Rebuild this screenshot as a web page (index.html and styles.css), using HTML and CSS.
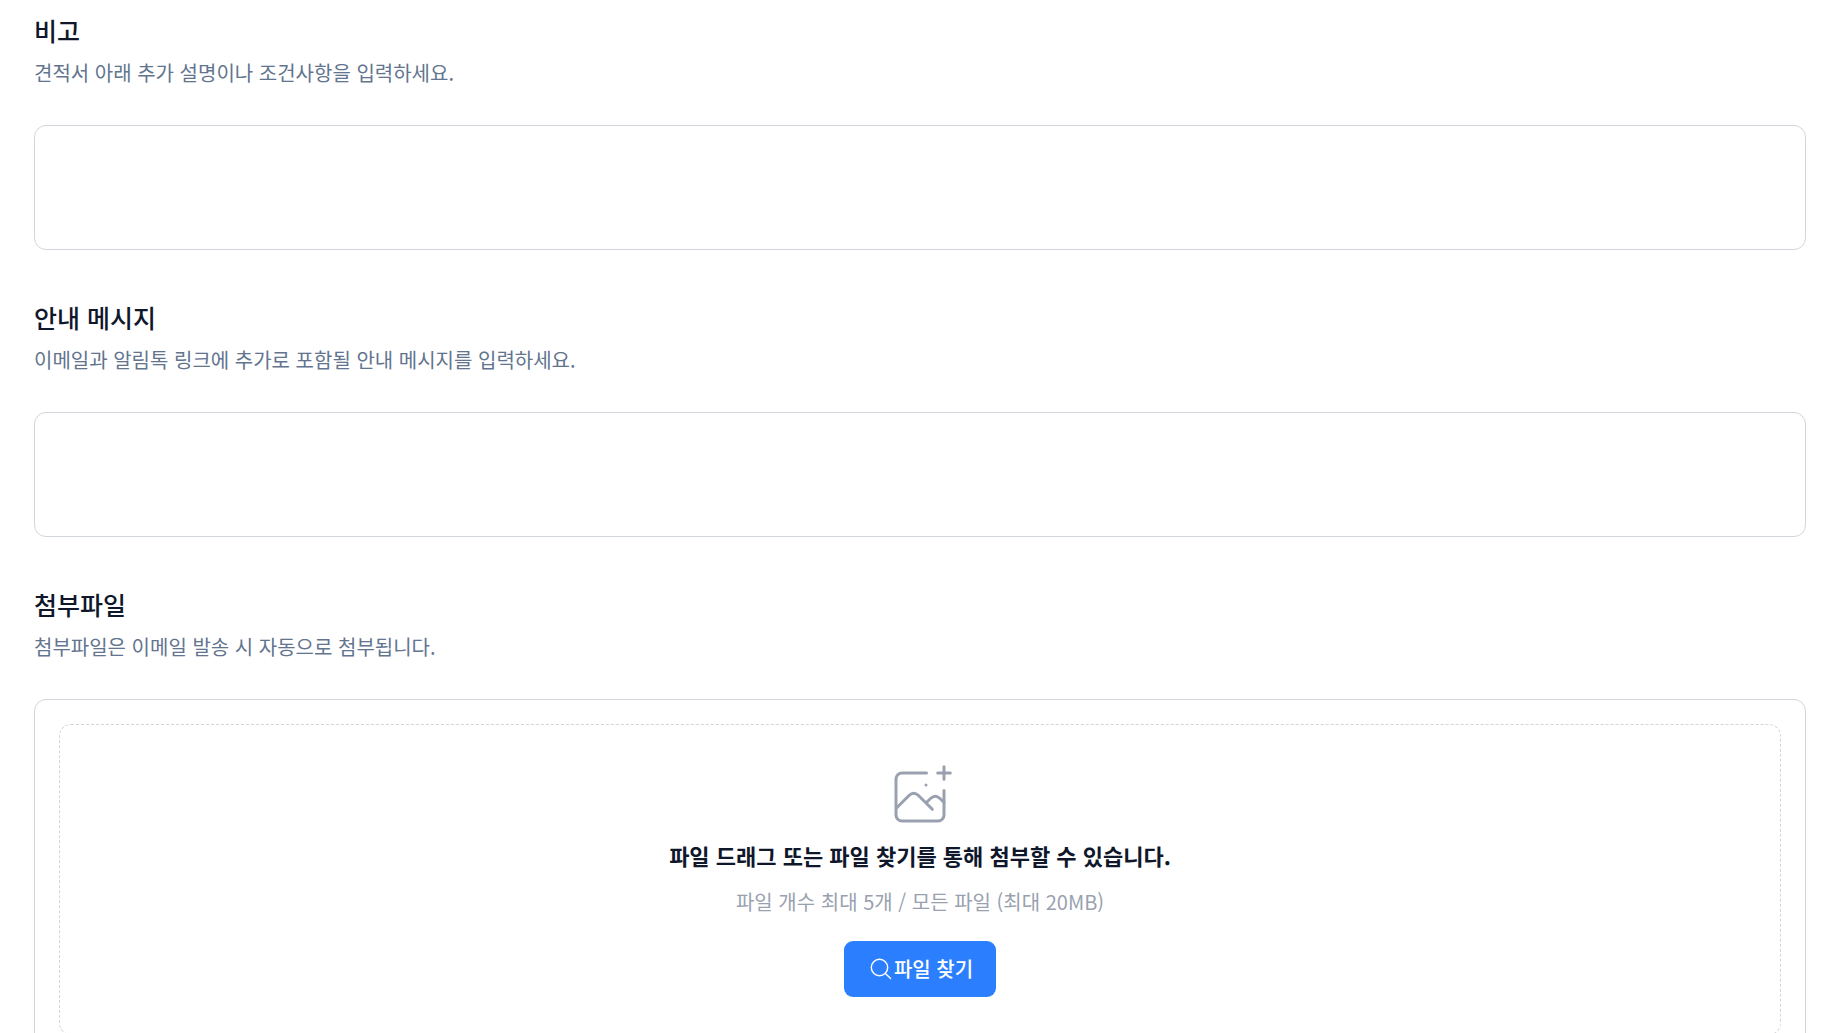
FILE: index.html
```html
<!DOCTYPE html>
<html lang="ko">
<head>
<meta charset="utf-8">
<meta name="viewport" content="width=device-width, initial-scale=1">
<title>견적서 작성</title>
<link rel="stylesheet" href="styles.css">
</head>
<body>
<main class="form">
  <section class="section">
    <label class="section-title" for="remarks">비고</label>
    <p class="section-desc" id="remarks-desc">견적서 아래 추가 설명이나 조건사항을 입력하세요.</p>
    <textarea class="textarea" id="remarks" aria-describedby="remarks-desc"></textarea>
  </section>
  <section class="section">
    <label class="section-title" for="message">안내 메시지</label>
    <p class="section-desc" id="message-desc">이메일과 알림톡 링크에 추가로 포함될 안내 메시지를 입력하세요.</p>
    <textarea class="textarea" id="message" aria-describedby="message-desc"></textarea>
  </section>
  <section class="section">
    <h2 class="section-title">첨부파일</h2>
    <p class="section-desc">첨부파일은 이메일 발송 시 자동으로 첨부됩니다.</p>
    <div class="upload">
      <div class="dropzone">
        <svg class="gallery-icon" viewBox="0 0 70 70" aria-hidden="true">
          <path d="M41.500 16H17a6 6 0 0 0-6 6V58a6 6 0 0 0 6 6H53a6 6 0 0 0 6-6V33.500M52.700 16H65.300M59 9.700V22.300"/>
          <path d="M11.500 51 24 38.500Q28.700 34 33.500 38.500L47.300 52.300M41 46 45.500 41.500Q50.300 37 55 41.500L59 45.500"/>
          <circle class="dot" cx="41" cy="28" r="1.500"/>
        </svg>
        <p class="drop-title">파일 드래그 또는 파일 찾기를 통해 첨부할 수 있습니다.</p>
        <p class="drop-hint">파일 개수 최대 5개 / 모든 파일 (최대 20MB)</p>
        <button class="browse" type="button">
          <svg class="search-icon" viewBox="0 0 24 24" aria-hidden="true">
            <circle cx="10.500" cy="10.500" r="8.200"/>
            <path d="M16.400 16.400 21.600 21.600"/>
          </svg>
          파일 찾기
        </button>
      </div>
    </div>
  </section>
</main>
</body>
</html>
```
FILE: styles.css
```css
* {
  box-sizing: border-box;
}

html {
  scrollbar-width: none;
}

body {
  margin: 0;
  background: #fff;
  color: #0f172b;
  font-family: "Noto Sans CJK KR", sans-serif;
  font-size: 20px;
  line-height: 30px;
}

.form {
  display: flex;
  flex-direction: column;
  gap: 48px;
  padding: 11px 23px 25px 34px;
}

.section {
  display: flex;
  flex-direction: column;
}

.section-title {
  margin: 0;
  font-size: 25px;
  font-weight: 500;
  line-height: 38px;
}

.section-desc {
  margin: 9px 0 37px;
  color: #62748e;
}

.textarea {
  display: block;
  width: 100%;
  height: 125px;
  padding: 15px;
  border: 1px solid #d1d5dc;
  border-radius: 12px;
  background: #fff;
  color: inherit;
  font: inherit;
  resize: none;
}

.upload {
  padding: 24px;
  border: 1px solid #d1d5dc;
  border-radius: 12px;
}

.dropzone {
  display: flex;
  flex-direction: column;
  align-items: center;
  padding: 32px 24px 37px;
  border: 1px dashed #d1d5dc;
  border-radius: 12px;
}

.gallery-icon {
  width: 70px;
  height: 70px;
  fill: none;
  stroke: #99a1af;
  stroke-width: 3;
  stroke-linecap: round;
  stroke-linejoin: round;
}

.gallery-icon .dot {
  fill: #99a1af;
  stroke: none;
}

.drop-title {
  margin: 13px 0 17px;
  font-size: 22px;
  font-weight: 700;
}

.drop-hint {
  margin: 0 0 24px;
  color: #99a1af;
}

.browse {
  display: inline-flex;
  align-items: center;
  gap: 1px;
  height: 56px;
  padding: 0 23px 0 25px;
  border: 0;
  border-radius: 9px;
  background: #2b7fff;
  color: #fff;
  font: inherit;
  font-weight: 500;
  cursor: pointer;
}

.search-icon {
  width: 24px;
  height: 24px;
  fill: none;
  stroke: currentColor;
  stroke-width: 1.4;
  stroke-linecap: round;
}
```
